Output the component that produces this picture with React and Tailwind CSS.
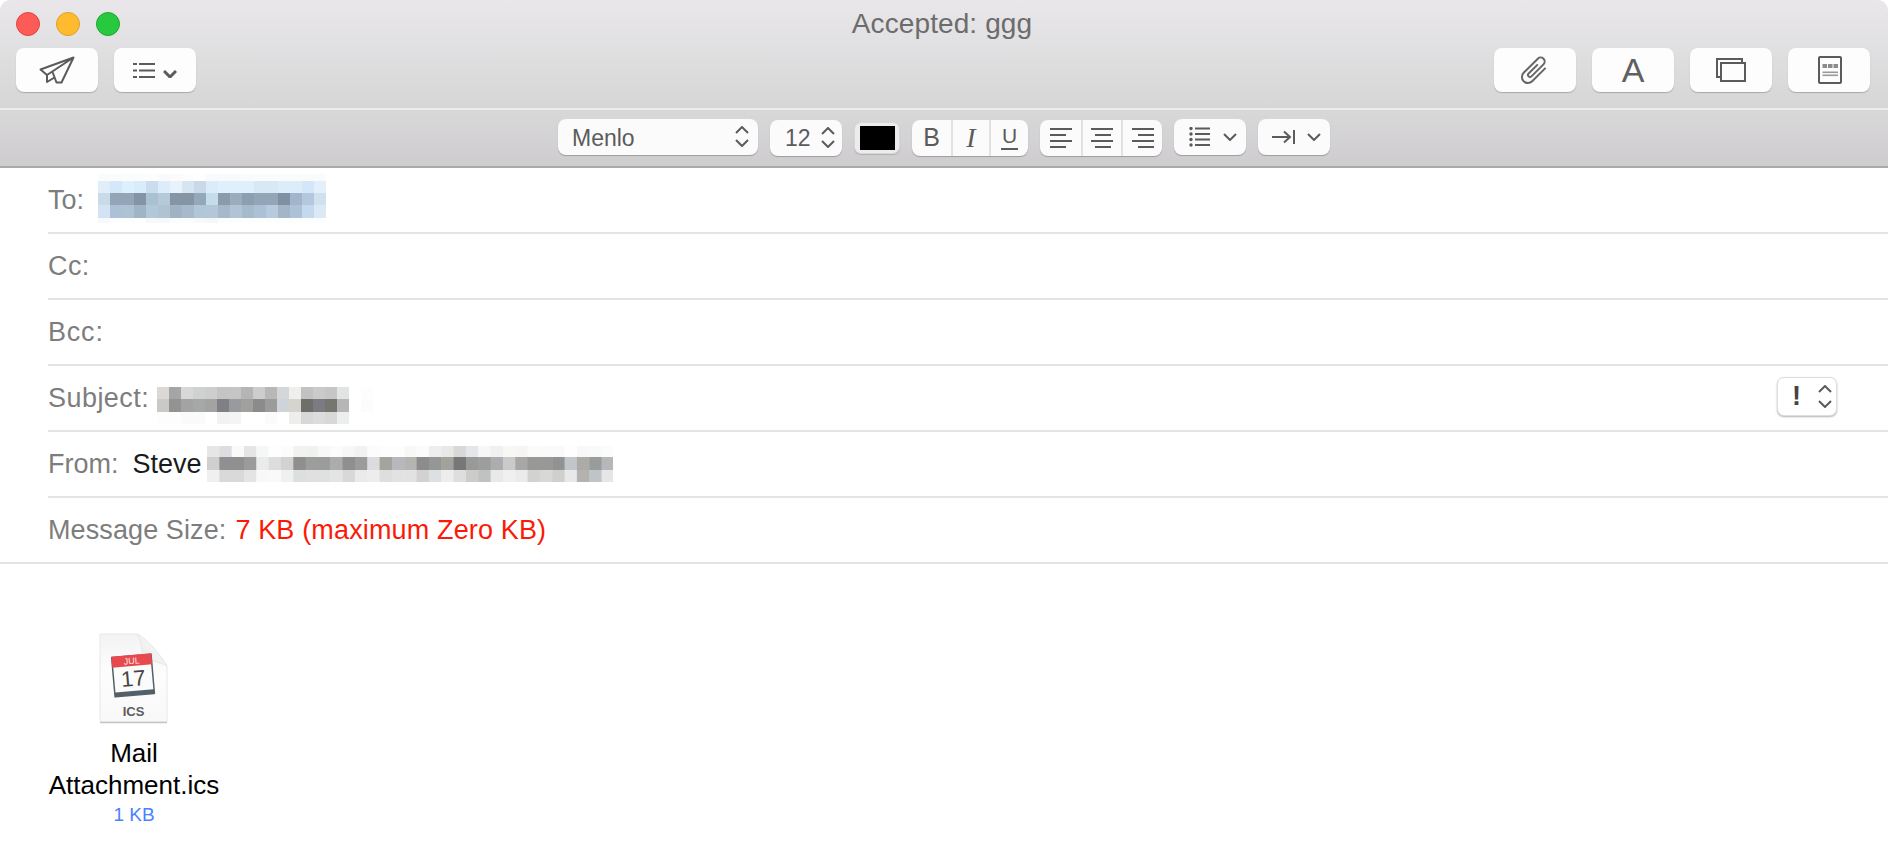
import React from 'react';

// redacted address blocks, row by row
const TO_MOSAIC = [
  { h: 7, cells: ['fafbfb','fafbfb','fbfcfc','fbfcfc','fdfdfd','fafafa','fbfbfb','fdfdfd','fefefe','f9fafb','f9fafb','f9fafb','fafbfb','fafbfb','fafbfb','fafbfb','fafbfb','fafbfb','fafbfb'] },
  { h: 12, cells: ['e0eefb','d4e8f9','ddf0fc','d9ecfa','cadcee','ddecfb','e6f3fc','d5e6f2','c9d9e7','dbebfa','ddf0fc','ddf0fc','ddf0fc','d8e9f6','d8e9f6','dcedfa','dcedfa','d3e7fa','e3f0fc'] },
  { h: 12, cells: ['c9dbe8','93a5b6','93a5b6','8494a6','a9c1d2','b5cad6','8595a5','8595a3','94a8bc','c5dcec','8a9cac','9aadbf','8c9fb1','93a6b8','93a6b8','8090a4','a2b5ca','b3c8dc','d0e0ee'] },
  { h: 13, cells: ['d3e3f3','acc0d8','aec2d4','9fb4c4','b2c8d8','afc3d2','9fb3c5','a6bacb','b2c6d9','b4c7d8','a4b9c9','b0c4d6','a5bacb','adc1d6','b6cbdd','a2b6c8','adc2d6','c4d8ee','dbe9f7'] },
  { h: 5, cells: ['f7fafd','fbfdfe','fbfdfe','fdfeff','f7f8f9','f7f8f9','fbfcfd','fbfcfd','f8f9fa','f6f7f8','fcfefe','fcfefe','fcfefe','fcfefe','fcfefe','fcfefe','fcfefe','fcfefe','fcfefe'] },
];

const SUBJECT_MOSAIC = [
  { h: 12, cells: ['dcd8d5','a5a5a5','d8d8d8','cfd2d2','d0cecc','c4c4c4','c5c5c5','b5b5b5','cdcdcd','b8b8b6','d4d7da','f0efed','c2c2c2','cacaca','c6c6c6','e2e4e4','ffffff','fdfdfd'] },
  { h: 13, cells: ['c9c9c7','939392','a3a3a3','a5a7a8','a3a3a1','7f7f85','999a9e','a0a09e','8b8b8b','9b9b99','ced4d9','d6d4cf','6f6f6a','7b7c82','767670','b6b6b6','ffffff','fcfcfc'] },
  { h: 12, cells: ['fdfdfd','fdfdfd','fafafa','fafafa','ffffff','f2f2f2','f2f4f6','ffffff','ffffff','fbfbfb','ffffff','efeeec','d8d8d8','dcdcdc','d8d8d8','ecedef','ffffff','ffffff'] },
];

const FROM_MOSAIC = [
  { h: 11, cells: ['e6e6e6','dcdde0','fafafa','e5e5e3','f6f8f7','fefefe','fcfcfc','f2f2f0','f0f2f1','f7f8f7','fbfbfb','f7f7f7','f2f2f2','fcfcfc','fdfdfd','fdfdfd','f8f8f8','fbfbfb','eeeeee','e8e8e8','d8d8d8','e5e6ea','f7f7f5','f0f0f0','f7f7f4','f5f5f3','fbfbfb','fafafa','fafafa','fefefe','f8f8f8','f8f9f8','fcfcfc'] },
  { h: 13, cells: ['cfcfcf','909090','909090','9a9c9c','eaecec','dddddd','d2d2d0','8f8f8f','9d9d9b','9b9d9c','acacac','8f8f8f','9c9a9d','dcdce0','a3a39f','b6b8bb','b4b4b0','8c8c8c','959796','a2a29c','777777','999999','9d9d9d','adadb0','cbc9c9','a8a6a6','989896','989896','929292','c2c5c9','adaba8','9a9c9c','b5b7ba'] },
  { h: 12, cells: ['f0f0ee','d9d9d9','d9d9d9','e4e4e4','f7f8f7','f9f9f9','f0f0f0','dcdfdf','e0e0e0','e0e0e0','e3e5e5','d8d8d8','eaeaea','ededed','dedede','e2e2e2','e2e2e2','d2d2d2','dde0e0','ededed','dedede','cdccca','bfc2c1','e8eaea','f0f0f0','ebebeb','d2d2d2','d9d8d6','cfcfcf','e8e8ea','b4b2b0','bec4c7','e6e6e6'] },
];

function Mosaic({ rows, cell = 12, className = '' }) {
  const width = rows[0].cells.length * cell;
  const height = rows.reduce((sum, r) => sum + r.h, 0);
  let y = 0;
  return (
    <svg width={width} height={height} className={className}>
      {rows.map((row, i) => {
        const top = y;
        y += row.h;
        return row.cells.map((c, j) => (
          <rect key={`${i}-${j}`} x={j * cell} y={top} width={cell + 0.5} height={row.h} fill={`#${c}`} />
        ));
      })}
    </svg>
  );
}

const ICON = '#5b5b5b';

function Chevron({ up = false, w = 14, h = 8, sw = 2 }) {
  return (
    <svg width={w} height={h} viewBox="0 0 14 8" fill="none" stroke={ICON} strokeWidth={sw}>
      <path d={up ? 'M1 7 L7 1 L13 7' : 'M1 1 L7 7 L13 1'} />
    </svg>
  );
}

function UpDown({ gap = 'gap-[5px]' }) {
  return (
    <div className={`flex flex-col ${gap}`}>
      <Chevron up />
      <Chevron />
    </div>
  );
}

function ToolButton({ children }) {
  return (
    <button className="flex h-[44px] w-[82px] items-center justify-center rounded-[8px] bg-[#fdfdfd] shadow-[0_1px_1px_rgba(0,0,0,0.22)]">
      {children}
    </button>
  );
}

function Segment({ children, className = '' }) {
  return <div className={`flex h-[36px] items-center rounded-[8px] bg-[#fbfbfb] shadow-[0_1px_1px_rgba(0,0,0,0.25)] ${className}`}>{children}</div>;
}

function AlignLines({ kind }) {
  const x = kind === 'left' ? 0 : kind === 'center' ? 4 : 6;
  return (
    <svg width="22" height="20" fill={ICON}>
      <rect x="0" y="0" width="22" height="2" />
      <rect x={x} y="6" width={16} height="2" />
      <rect x="0" y="12" width="22" height="2" />
      <rect x={x} y="18" width={16} height="2" />
    </svg>
  );
}

function CalendarFile() {
  return (
    <svg width="70" height="92" viewBox="0 0 70 92">
      <defs>
        <linearGradient id="page" x1="0" y1="0" x2="0" y2="1">
          <stop offset="0" stopColor="#f3f3f3" />
          <stop offset="0.45" stopColor="#fdfdfd" />
          <stop offset="1" stopColor="#f8f8f8" />
        </linearGradient>
        <linearGradient id="fold" x1="0" y1="1" x2="1" y2="0">
          <stop offset="0" stopColor="#e6e6e6" />
          <stop offset="1" stopColor="#ffffff" />
        </linearGradient>
      </defs>
      <path d="M1 1 H38 C48 6 60 20 68 33 V89 H1 Z" fill="url(#page)" stroke="#e8e8e8" strokeWidth="1" />
      <path d="M1 89.5 H68" stroke="#c4c4c4" strokeWidth="1.5" />
      <path d="M38 1 C43 10 44 24 44 28 C52 27 62 30 68 33 C60 20 48 6 38 1 Z" fill="url(#fold)" stroke="#e4e4e4" strokeWidth="0.7" />
      <g transform="rotate(-5 34 42)">
        <rect x="13.5" y="22" width="41" height="41" rx="1" fill="#53606a" />
        <rect x="15" y="23" width="38" height="35" fill="#fbfbfb" />
        <rect x="14" y="22" width="40" height="11" fill="#e8494e" />
        <text x="34" y="31" textAnchor="middle" fontSize="9" fill="#ffe9e6" fontFamily="Liberation Sans, sans-serif">JUL</text>
        <text x="34" y="53" textAnchor="middle" fontSize="22" fill="#444444" fontFamily="Liberation Sans, sans-serif">17</text>
      </g>
      <text x="34.5" y="83" textAnchor="middle" fontSize="13" fontWeight="700" fill="#5c5c5c" fontFamily="Liberation Sans, sans-serif">ICS</text>
    </svg>
  );
}

function HeaderRow({ label, labelClass = '', children }) {
  return (
    <div className="ml-12 flex h-[66px] items-center border-b-2 border-[#e4e4e4] pt-px">
      <span className={`text-[#7d7d7d] ${labelClass}`}>{label}</span>
      {children}
    </div>
  );
}

export default function App() {
  return (
    <div className="h-screen overflow-hidden bg-white font-['Liberation_Sans',Arial,sans-serif] text-[27px] leading-none">
      {/* title bar */}
      <div className="h-[110px] rounded-t-[10px] border-b-2 border-[#ececec] bg-gradient-to-b from-[#e9e7ea] to-[#d6d6d6] px-4 pt-[10px]">
        <div className="grid h-[24px] grid-cols-[1fr_auto_1fr] items-center">
          <div className="flex gap-4">
            <div className="h-[24px] w-[24px] rounded-full border border-[#e2443f] bg-[#fc5b57]" />
            <div className="h-[24px] w-[24px] rounded-full border border-[#dfa023] bg-[#ffbb2e]" />
            <div className="h-[24px] w-[24px] rounded-full border border-[#1fa633] bg-[#28c83f]" />
          </div>
          <div className="mr-[4px] text-[28px] tracking-[0.1px] text-[#6c6c6c]">Accepted: ggg</div>
          <div />
        </div>

        <div className="mt-[14px] flex items-center">
          <div className="flex gap-4">
            <ToolButton>
              <svg width="36" height="28" fill="none" stroke={ICON} strokeWidth="2" strokeLinejoin="round">
                <path d="M34.5 1.5 L1.5 13.5 L8 19 L8 26 L15.5 21.5 M8 19 L34.5 1.5 L22.5 26.5 L17.5 26.5 L13.5 16" />
              </svg>
            </ToolButton>
            <ToolButton>
              <div className="ml-[-1px] flex items-end gap-2">
                <svg width="22" height="15" fill={ICON}>
                  <rect x="0" y="0" width="4" height="2" />
                  <rect x="6" y="0" width="16" height="2" />
                  <rect x="0" y="6.5" width="4" height="2" />
                  <rect x="6" y="6.5" width="16" height="2" />
                  <rect x="0" y="13" width="4" height="2" />
                  <rect x="6" y="13" width="16" height="2" />
                </svg>
                <Chevron w={14} h={8} sw={3} />
              </div>
            </ToolButton>
          </div>
          <div className="ml-auto flex gap-4 pr-[2px]">
            <ToolButton>
              <svg width="34" height="34" viewBox="0 0 34 34" fill="none" stroke="#666666" strokeWidth="2">
                <g transform="rotate(45 17 17)">
                  <path d="M23 8 V27 a6 6 0 0 1 -12 0 V7 a4 4 0 0 1 8 0 V24 a2 2 0 0 1 -4 0 V11" />
                </g>
              </svg>
            </ToolButton>
            <ToolButton>
              <span className="text-[34px] text-[#606060]">A</span>
            </ToolButton>
            <ToolButton>
              <svg width="30" height="24" fill="none" stroke={ICON} strokeWidth="2">
                <rect x="1" y="1" width="25" height="18" />
                <rect x="5" y="5" width="24" height="18" fill="#fdfdfd" />
              </svg>
            </ToolButton>
            <ToolButton>
              <svg width="24" height="28" fill="none" className="ml-[1px]">
                <rect x="1" y="1" width="22" height="26" rx="1" stroke={ICON} strokeWidth="2" />
                <rect x="4.5" y="8" width="4.5" height="4" fill="#8c8c8c" />
                <rect x="10" y="8" width="4.5" height="4" fill="#8c8c8c" />
                <rect x="15.5" y="8" width="4.5" height="4" fill="#8c8c8c" />
                <rect x="4.5" y="15.5" width="15.5" height="1.6" fill="#9a9a9a" />
                <rect x="4.5" y="18.5" width="15.5" height="1.6" fill="#9a9a9a" />
              </svg>
            </ToolButton>
          </div>
        </div>
      </div>

      {/* format bar */}
      <div className="flex h-[58px] items-center justify-center gap-3 border-b-2 border-[#aaaaaa] bg-gradient-to-b from-[#d9d8d9] to-[#cecccf] pb-px text-[23px] text-[#5b5b5b]">
        <Segment className="mt-[-2px] w-[200px] justify-between pl-[14px] pr-[9px]">
          <span className="pt-[4px]">Menlo</span>
          <UpDown />
        </Segment>
        <Segment className="w-[72px] justify-between pl-[15px] pr-[7px]">
          <span className="pt-[2px]">12</span>
          <UpDown />
        </Segment>
        <div className="flex h-[32px] w-[46px] items-center justify-center rounded-[7px] border border-[#d8d8d8] bg-[#ececec] shadow-[0_1px_1px_rgba(0,0,0,0.15)]">
          <div className="h-[24px] w-[35px] bg-black" />
        </div>
        <Segment className="w-[116px] text-[25px]">
          <div className="flex h-full w-[41px] items-center justify-center border-r-2 border-[#e2e2e2] font-medium">B</div>
          <div className="flex h-full w-[38px] items-center justify-center border-r-2 border-[#e2e2e2] font-['Liberation_Serif',serif] text-[28px] italic">I</div>
          <div className="flex h-full w-[37px] items-center justify-center">
            <span className="border-b-2 border-[#5b5b5b] px-px pb-[2px] text-[21px]">U</span>
          </div>
        </Segment>
        <Segment className="w-[122px]">
          <div className="flex h-full w-[43px] items-center justify-center border-r-2 border-[#e2e2e2]"><AlignLines kind="left" /></div>
          <div className="flex h-full w-[40px] items-center justify-center border-r-2 border-[#e2e2e2]"><AlignLines kind="center" /></div>
          <div className="flex h-full w-[39px] items-center justify-center"><AlignLines kind="right" /></div>
        </Segment>
        <Segment className="mt-[-2px] w-[72px] justify-between pl-[15px] pr-[9px]">
          <svg width="21" height="20" fill={ICON}>
            <circle cx="2" cy="1.5" r="1.7" />
            <circle cx="2" cy="7" r="1.7" />
            <circle cx="2" cy="12.5" r="1.7" />
            <circle cx="2" cy="18" r="1.7" />
            <rect x="6" y="0.5" width="15" height="2" />
            <rect x="6" y="6" width="15" height="2" />
            <rect x="6" y="11.5" width="15" height="2" />
            <rect x="6" y="17" width="15" height="2" />
          </svg>
          <Chevron />
        </Segment>
        <Segment className="mt-[-2px] w-[72px] justify-between pl-[14px] pr-[9px]">
          <svg width="23" height="14" fill="none" stroke={ICON} strokeWidth="2">
            <path d="M0 7 H18 M12 1.5 L18 7 L12 12.5 M22 0 V14" />
          </svg>
          <Chevron />
        </Segment>
      </div>

      {/* message headers */}
      <HeaderRow label="To:">
        <Mosaic rows={TO_MOSAIC} className="ml-[14px] mt-[-5px]" />
      </HeaderRow>
      <HeaderRow label="Cc:" labelClass="tracking-[0.4px]" />
      <HeaderRow label="Bcc:" labelClass="tracking-[0.8px]" />
      <HeaderRow label="Subject:" labelClass="tracking-[0.45px]">
        <Mosaic rows={SUBJECT_MOSAIC} className="ml-[8px] mt-[13px]" />
        <div className="ml-auto mr-[51px] mt-[-5px] flex h-[39px] w-[60px] items-center justify-between rounded-[7px] border border-[#dedede] bg-white pl-[14px] pr-[4px] shadow-[0_1px_2px_rgba(0,0,0,0.3)]">
          <span className="font-bold text-[#444444]">!</span>
          <UpDown gap="gap-[7px]" />
        </div>
      </HeaderRow>
      <HeaderRow label="From:">
        <span className="ml-[14px] text-[#1a1a1a]">Steve</span>
        <Mosaic rows={FROM_MOSAIC} cell={12.33} className="ml-[5px] mt-[-1px]" />
      </HeaderRow>
      <div className="flex h-[66px] items-center border-b-2 border-[#e4e4e4] pl-12 pt-px">
        <span className="tracking-[0.1px] text-[#7d7d7d]">Message Size:</span>
        <span className="ml-[9px] tracking-[0.15px] text-[#fb1a08]">7 KB (maximum Zero KB)</span>
      </div>

      {/* attachment */}
      <div className="ml-12 flex w-[172px] flex-col items-center pt-[69px]">
        <CalendarFile />
        <div className="mt-[12px] text-center text-[26px] leading-[32px] text-black">
          Mail
          <br />
          Attachment.ics
        </div>
        <div className="mt-[4px] text-[19px] text-[#4b82fb]">1 KB</div>
      </div>
    </div>
  );
}
